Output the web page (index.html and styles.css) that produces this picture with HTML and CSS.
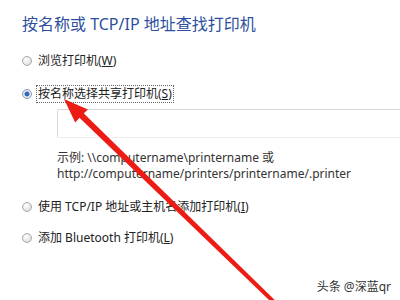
FILE: index.html
```html
<!DOCTYPE html>
<html lang="zh-CN">
<head>
<meta charset="utf-8">
<link rel="stylesheet" href="styles.css">
</head>
<body>
<div class="dialog">
  <h1 class="title">按名称或 TCP/IP 地址查找打印机</h1>
  <div class="options">
    <div class="opt opt-browse"><span class="radio"></span><span class="label">浏览打印机(<u>W</u>)</span></div>
    <div class="opt opt-shared"><span class="radio checked"></span><span class="label focus">按名称选择共享打印机(<u>S</u>)</span></div>
    <div class="field"></div>
    <div class="example">
      <div class="ex-line">示例: \\computername\printername 或</div>
      <div class="ex-line">http://computername/printers/printername/.printer</div>
    </div>
    <div class="opt opt-tcp"><span class="radio"></span><span class="label">使用 TCP/IP 地址或主机名添加打印机(<u>I</u>)</span></div>
    <div class="opt opt-bt"><span class="radio"></span><span class="label">添加 Bluetooth 打印机(<u>L</u>)</span></div>
  </div>
</div>
<svg class="arrow" width="400" height="300" viewBox="0 0 400 300">
  <polygon fill="#ec1c14" points="64,99 75.2,122.5 81.3,115.7 87.9,109.4"/>
  <polygon fill="#ec1c14" points="77.9,116.2 82.1,111.8 277.4,302.6 274.6,305.4"/>
</svg>
<div class="watermark">头条 @深蓝qr</div>
</body>
</html>
```

FILE: styles.css
```css
html, body {
  margin: 0;
  padding: 0;
  background: #ffffff;
  overflow: hidden;
}
body {
  width: 400px;
  height: 300px;
  position: relative;
  font-family: "Noto Sans", "Noto Sans CJK SC", sans-serif;
  font-size: 12px;
  color: #222;
}
.dialog {
  padding: 14px 0 0 22px;
}
.title {
  margin: 0;
  font-size: 16px;
  font-weight: normal;
  line-height: 20px;
  color: #2d4f9e;
  white-space: nowrap;
}
.options {
  display: flex;
  flex-direction: column;
}
.opt {
  display: flex;
  align-items: center;
  gap: 6px;
  height: 16px;
  line-height: 16px;
  white-space: nowrap;
}
.opt-browse { margin-top: 19px; }
.opt-shared { margin-top: 17px; }
.opt-tcp { margin-top: 17px; }
.opt-bt { margin-top: 15px; }
.label u {
  text-decoration: underline;
}
.focus {
  outline: 1px dotted #666;
  outline-offset: 0;
  padding: 0 1px;
  margin-left: -1px;
}
.radio {
  width: 10px;
  height: 10px;
  border-radius: 50%;
  border: 1px solid #a9a9a9;
  background: radial-gradient(circle at 40% 35%, #ffffff 0%, #e6e6e6 60%, #cfcfcf 100%);
  flex: none;
  box-sizing: border-box;
}
.radio.checked {
  border-color: #8a9bb4;
  background: radial-gradient(circle at 50% 50%, #3a78c9 0%, #2b5fae 35%, #dfe6ef 50%, #f2f2f2 100%);
}
.field {
  margin: 7px -3px 0 35px;
  height: 29px;
  box-sizing: border-box;
  border: 1px solid #d9d9d9;
  border-bottom-color: #eeeeee;
  border-radius: 2px;
  background: #fff;
}
.example {
  margin: 12px 0 0 35px;
  font-size: 12px;
  color: #333;
  white-space: nowrap;
}
.ex-line {
  line-height: 16px;
}
.arrow {
  position: absolute;
  left: 0;
  top: 0;
}
.watermark {
  position: absolute;
  right: 9px;
  top: 279px;
  font-size: 12px;
  line-height: 16px;
  color: #333;
}
```
